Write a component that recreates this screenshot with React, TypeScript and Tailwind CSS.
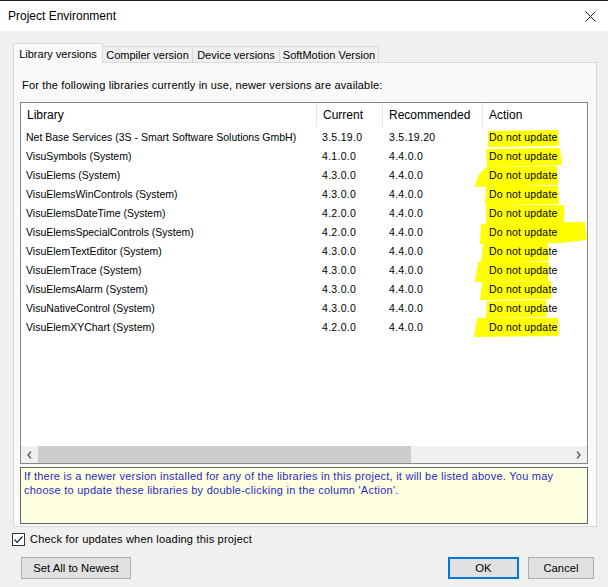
import React from "react";

const libraries: [string, string, string][] = [
    ["Net Base Services (3S - Smart Software Solutions GmbH)", "3.5.19.0", "3.5.19.20"],
    ["VisuSymbols (System)", "4.1.0.0", "4.4.0.0"],
    ["VisuElems (System)", "4.3.0.0", "4.4.0.0"],
    ["VisuElemsWinControls (System)", "4.3.0.0", "4.4.0.0"],
    ["VisuElemsDateTime (System)", "4.2.0.0", "4.4.0.0"],
    ["VisuElemsSpecialControls (System)", "4.2.0.0", "4.4.0.0"],
    ["VisuElemTextEditor (System)", "4.3.0.0", "4.4.0.0"],
    ["VisuElemTrace (System)", "4.3.0.0", "4.4.0.0"],
    ["VisuElemsAlarm (System)", "4.3.0.0", "4.4.0.0"],
    ["VisuNativeControl (System)", "4.3.0.0", "4.4.0.0"],
    ["VisuElemXYChart (System)", "4.2.0.0", "4.4.0.0"],
];

// hand drawn marker strokes behind the "Action" column (page coordinates)
const marks = [
    "489,131 557,130 558,144 489,145",
    "487,149 559,148 561,163 488,165",
    "487,167 556,166 557,183 476,185 479,175",
    "487,186 557,186 558,202 486,203",
    "487,205 563,205 563,221 487,222",
    "482,224 584,222 586,238 560,241 481,242",
    "484,244 547,243 548,259 482,261",
    "479,262 548,262 547,279 476,280",
    "483,282 550,281 550,297 481,298",
    "488,301 545,300 546,315 487,316",
    "478,318 557,318 558,334 475,335",
];

function Chevron({ dir }: { dir: "left" | "right" }) {
    return (
        <svg width="5" height="8" viewBox="0 0 5 8">
            <path
                d={dir === "left" ? "M4 0.5 L1 4 L4 7.5" : "M1 0.5 L4 4 L1 7.5"}
                fill="none"
                stroke="#606060"
                strokeWidth="1.4"
            />
        </svg>
    );
}

function Tab({ label, active, className }: { label: string; active?: boolean; className?: string }) {
    if (active) {
        return (
            <div className={`relative z-10 -mb-px flex h-[20px] w-[90px] items-start justify-center border border-b-0 border-[#d9d9d9] bg-[#f9f9f9] pt-[3px] text-[11px] leading-[14px] ${className ?? ""}`}>
                {label}
            </div>
        );
    }
    return (
        <div className={`flex h-[16px] items-center justify-center border-t border-r border-[#d9d9d9] bg-[#f0f0f0] text-[11px] leading-[14px] ${className ?? ""}`}>
            {label}
        </div>
    );
}

function Button({ children, primary, className }: { children: React.ReactNode; primary?: boolean; className?: string }) {
    return (
        <button
            className={`flex h-[22px] items-center justify-center bg-[#e1e1e1] text-[11.3px] ${primary ? "border-2 border-[#0078d7]" : "border border-[#adadad]"} ${className ?? ""}`}
        >
            {children}
        </button>
    );
}

export default function App() {
    return (
        <div className="flex h-[587px] w-[608px] flex-col overflow-hidden bg-[#f0f0f0] font-['Liberation_Sans',Arial,sans-serif] text-black">
            <div className="flex h-[31px] items-center justify-between border-t border-[#1f1f1f] bg-white pl-[8px] pr-[12px]">
                <span className="text-[12px]">Project Environment</span>
                <svg width="11" height="11" viewBox="0 0 11 11">
                    <path d="M0.5 0.5 L10.5 10.5 M10.5 0.5 L0.5 10.5" stroke="#111" strokeWidth="1" />
                </svg>
            </div>

            <div className="flex flex-col px-[13px] pt-[12px]">
                <div className="flex h-[19px] items-end">
                    <Tab label="Library versions" active />
                    <Tab label="Compiler version" className="w-[90px]" />
                    <Tab label="Device versions" className="w-[87px]" />
                    <Tab label="SoftMotion Version" className="w-[99px]" />
                </div>

                <div className="flex h-[465px] w-[584px] flex-col border border-[#d9d9d9] bg-[#f9f9f9] pl-[6px] pr-[8px]">
                    <p className="ml-[2px] pt-[15px] text-[11px] leading-[14px] tracking-[0.16px]">
                        For the following libraries currently in use, newer versions are available:
                    </p>

                    <div className="relative mt-[10px] flex h-[362px] w-[568px] flex-col border border-[#828790] bg-white">
                        <svg
                            className="pointer-events-none absolute left-0 top-0"
                            width="566"
                            height="360"
                            viewBox="21 102 566 360"
                        >
                            {marks.map((pts, i) => (
                                <polygon key={i} points={pts} fill="#ffff00" stroke="#ffff00" strokeWidth="2" strokeLinejoin="round" />
                            ))}
                        </svg>

                        <div className="relative flex h-[24px] items-center text-[12px]">
                            <div className="h-full w-[296px] border-r border-[#e5e5e5] pl-[6px] leading-[24px]">Library</div>
                            <div className="h-full w-[66px] border-r border-[#e5e5e5] pl-[6px] leading-[24px]">Current</div>
                            <div className="h-full w-[100px] border-r border-[#e5e5e5] pl-[6px] leading-[24px]">Recommended</div>
                            <div className="h-full flex-1 pl-[6px] leading-[24px]">Action</div>
                        </div>

                        <div className="relative flex flex-col pt-[1px] text-[10.5px]">
                            {libraries.map(([name, current, recommended]) => (
                                <div key={name} className="flex h-[19px] items-center">
                                    <div className="w-[296px] pl-[5px]">{name}</div>
                                    <div className="w-[66px] pl-[5px] tracking-[0.3px]">{current}</div>
                                    <div className="w-[100px] pl-[6px] tracking-[0.3px]">{recommended}</div>
                                    <div className="flex-1 pl-[6px] tracking-[0.2px]">Do not update</div>
                                </div>
                            ))}
                        </div>

                        <div className="relative mt-auto flex h-[17px] bg-[#f0f0f0]">
                            <div className="flex w-[17px] items-center justify-center">
                                <Chevron dir="left" />
                            </div>
                            <div className="flex flex-1">
                                <div className="h-full w-[373px] bg-[#cdcdcd]" />
                            </div>
                            <div className="flex w-[17px] items-center justify-center">
                                <Chevron dir="right" />
                            </div>
                        </div>
                    </div>

                    <div className="mt-[3px] h-[57px] w-[568px] border border-[#646464] bg-[#ffffe1] px-[3px] pt-[1px] text-[11px] leading-[14px] tracking-[0.25px] text-[#2a2ac4]">
                        If there is a newer version installed for any of the libraries in this project, it will be listed above. You may
                        choose to update these libraries by double-clicking in the column 'Action'.
                    </div>
                </div>

                <label className="ml-[-1px] mt-[6px] flex h-[13px] items-center gap-[5px] text-[11px] leading-[13px] tracking-[0.2px]">
                    <span className="flex h-[13px] w-[13px] items-center justify-center border border-[#333] bg-white">
                        <svg width="11" height="11" viewBox="0 0 11 11">
                            <path d="M1.5 5.5 L4.2 8.3 L9.5 2.5" fill="none" stroke="#222" strokeWidth="1.2" />
                        </svg>
                    </span>
                    Check for updates when loading this project
                </label>

                <div className="mt-[11px] flex items-center">
                    <Button className="ml-[8px] w-[110px]">Set All to Newest</Button>
                    <Button primary className="ml-auto w-[71px]">OK</Button>
                    <Button className="ml-[9px] mr-[1px] w-[66px]">Cancel</Button>
                </div>
            </div>
        </div>
    );
}
